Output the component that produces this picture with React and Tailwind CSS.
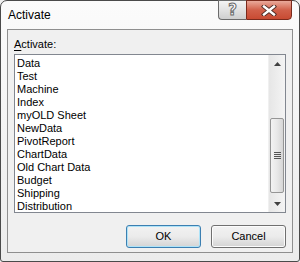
import React from "react";

const items = [
  "Data",
  "Test",
  "Machine",
  "Index",
  "myOLD Sheet",
  "NewData",
  "PivotReport",
  "ChartData",
  "Old Chart Data",
  "Budget",
  "Shipping",
  "Distribution",
];

// Tiny triangles for the scrollbar arrow buttons
const Arrow = ({ up }) => (
  <svg width="7" height="4" viewBox="0 0 7 4">
    {up ? <path d="M3.5 0 L7 4 L0 4 Z" fill="#404040" /> : <path d="M0 0 L7 0 L3.5 4 Z" fill="#404040" />}
  </svg>
);

const App = () => {
  return (
    <div className="w-[300px] h-[262px] bg-[#f0f0f0]">
      <div className="w-[300px] h-[262px] flex flex-col border border-[#4a4a4a] rounded-t-[7px] rounded-b-[3px] bg-linear-to-b from-[#fbfbfb] to-[#ececec] px-[6px] pb-[8px] font-['Liberation_Sans',Arial,sans-serif] text-black">
        {/* Title bar */}
        <div className="h-[28px] flex items-start justify-between shrink-0">
          <span className="text-[12px] leading-[14px] pt-[7px] pl-[1px]">Activate</span>
          <div className="flex -mt-[1px] mr-[1px]">
            <div className="w-[28px] h-[20px] border border-[#6b6b6b] border-r-0 rounded-bl-[4px] bg-linear-to-b from-[#f4f4f4] via-[#e2e2e2] to-[#cfcfcf] flex items-center justify-center">
              <span className="text-[15px] leading-[15px] font-bold text-white [-webkit-text-stroke:1px_#6a6a6a] font-['DejaVu_Sans',sans-serif]">?</span>
            </div>
            <div className="w-[46px] h-[20px] border border-[#7a2a1c] rounded-br-[4px] bg-linear-to-b from-[#e9a99b] via-[#d1604a] to-[#c84a32] flex items-center justify-center">
              <svg width="16" height="11" viewBox="0 0 16 11">
                <path d="M3 1.5 L13 9.5 M13 1.5 L3 9.5" stroke="#4a2a24" strokeWidth="4.2" strokeLinecap="square" />
                <path d="M3 1.5 L13 9.5 M13 1.5 L3 9.5" stroke="#ffffff" strokeWidth="2.4" strokeLinecap="square" />
              </svg>
            </div>
          </div>
        </div>

        {/* Client area */}
        <div className="flex-1 flex flex-col border border-[#8f8f8f] bg-[#f0f0f0] pt-[8px] px-[6px]">
          <div className="text-[11px] leading-[13px]">
            <span className="underline underline-offset-[2px]">A</span>ctivate:
          </div>

          <div className="mt-[3px] h-[159px] flex border border-[#828790] bg-white">
            <div className="flex-1 pt-[2px] pl-[2px]">
              {items.map((it) => (
                <div key={it} className="text-[11px] leading-[13px] h-[13px] whitespace-nowrap">
                  {it}
                </div>
              ))}
            </div>
            <div className="w-[17px] flex flex-col bg-linear-to-r from-[#e6e6e6] to-[#f4f4f4] border-l border-[#f0f0f0]">
              <div className="h-[17px] flex items-center justify-center">
                <Arrow up />
              </div>
              <div className="flex-1 flex flex-col">
                <div className="mt-[46px] mx-[1px] h-[75px] border border-[#959595] rounded-[2px] bg-linear-to-r from-[#f3f3f3] via-[#e8e8e8] to-[#d6d6d6] flex flex-col items-center justify-center gap-[1px]">
                  <div className="w-[7px] h-[1px] bg-[#555]" />
                  <div className="w-[7px] h-[1px] bg-[#555]" />
                  <div className="w-[7px] h-[1px] bg-[#555]" />
                  <div className="w-[7px] h-[1px] bg-[#555]" />
                </div>
              </div>
              <div className="h-[17px] flex items-center justify-center">
                <Arrow />
              </div>
            </div>
          </div>

          <div className="mt-[12px] flex justify-end gap-[10px]">
            <button className="w-[75px] h-[23px] rounded-[3px] border border-[#3c7fb1] shadow-[inset_0_0_0_1px_#aee3f8] bg-linear-to-b from-[#f2f2f2] via-[#ebebeb] to-[#d4d4d4] text-[11px] leading-[13px]">
              OK
            </button>
            <button className="w-[75px] h-[23px] rounded-[3px] border border-[#707070] shadow-[inset_0_0_0_1px_#fcfcfc] bg-linear-to-b from-[#f2f2f2] via-[#ebebeb] to-[#d4d4d4] text-[11px] leading-[13px]">
              Cancel
            </button>
          </div>
        </div>
      </div>
    </div>
  );
};

export default App;
